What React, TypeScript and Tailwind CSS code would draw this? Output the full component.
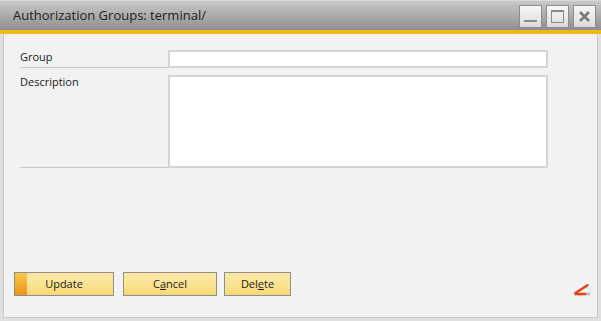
import React from "react";

function WinBtn({ children }: { children: React.ReactNode }) {
  return (
    <div className="w-[23px] h-[23px] border border-[#8c8c8c] bg-gradient-to-b from-[#f7f7f7] to-[#dcdcdc] flex items-center justify-center">
      {children}
    </div>
  );
}

function Btn({ children, w, accent }: { children: React.ReactNode; w: string; accent?: boolean }) {
  return (
    <div className={`${w} h-[24px] border border-[#8e8e8e] relative flex items-center justify-center bg-gradient-to-b from-[#fbe7a4] via-[#fae495] to-[#f6d873] text-[11px] text-[#1a1a1a]`}>
      {accent && (
        <div className="absolute left-0 top-0 bottom-0 w-[12px] bg-gradient-to-b from-[#f8c84a] to-[#ee9215]" />
      )}
      <span className="relative">{children}</span>
    </div>
  );
}

export default function App() {
  return (
    <div
      className="w-[601px] h-[321px] flex flex-col bg-[#f2f2f2] overflow-hidden"
      style={{ fontFamily: '"Open Sans", "Noto Sans", sans-serif' }}
    >
      <div className="h-[30px] flex items-center justify-between bg-gradient-to-b from-[#c9c9c9] to-[#8f8f8f] border-t border-[#d9d9d9] pl-[13px] pr-[5px]">
        <span className="text-[13px] text-[#222] leading-none">Authorization Groups: terminal/</span>
        <div className="flex gap-[4px] pt-[1px]">
          <WinBtn>
            <div className="w-[13px] h-[2px] bg-[#8a8a8a] mt-[10px]" />
          </WinBtn>
          <WinBtn>
            <div className="w-[13px] h-[13px] border border-[#8a8a8a] border-t-2" />
          </WinBtn>
          <WinBtn>
            <svg width="13" height="13" viewBox="0 0 13 13">
              <path d="M2 2 L11 11 M11 2 L2 11" stroke="#7a7a7a" strokeWidth="2.6" />
            </svg>
          </WinBtn>
        </div>
      </div>
      <div className="h-[4px] bg-[#f7b51c]" />
      <div className="flex-1 flex flex-col border-l-[3px] border-r-[3px] border-b-[3px] border-[#e0e0e0]">
        <div className="flex-1 flex flex-col border-l border-r border-b border-[#c8c8c8] pt-[16px] pl-[16px] pr-[49px] pb-[21px]">
          <div className="grid grid-cols-[148px_380px] gap-y-[7px] text-[11px] text-[#1a1a1a]">
            <div className="h-[18px] border-b border-[#c8c8c8] leading-[14px]">Group</div>
            <div className="h-[18px] bg-white border-2 border-[#d4d4d4]" />
            <div className="h-[93px] border-b border-[#c8c8c8] leading-[14px]">Description</div>
            <div className="h-[93px] bg-white border-2 border-[#d4d4d4]" />
          </div>
          <div className="flex-1" />
          <div className="flex items-end -ml-[6px] -mr-[46px]">
            <div className="flex">
              <Btn w="w-[100px]" accent>Update</Btn>
              <div className="w-[9px]" />
              <Btn w="w-[94px]">
                C<span className="underline">a</span>ncel
              </Btn>
              <div className="w-[7px]" />
              <Btn w="w-[67px]">
                Del<span className="underline">e</span>te
              </Btn>
            </div>
            <div className="flex-1" />
            <svg width="18" height="12" viewBox="0 0 18 12" className="mr-[3px]">
              <path d="M14.5 1.2 L2.5 9" stroke="#e8401c" strokeWidth="2.4" strokeLinecap="round" />
              <path d="M1.5 10 L13 10" stroke="#e8401c" strokeWidth="2.6" />
              <path d="M13 10 L17 10" stroke="#b8b8b8" strokeWidth="2.6" />
            </svg>
          </div>
        </div>
      </div>
    </div>
  );
}
